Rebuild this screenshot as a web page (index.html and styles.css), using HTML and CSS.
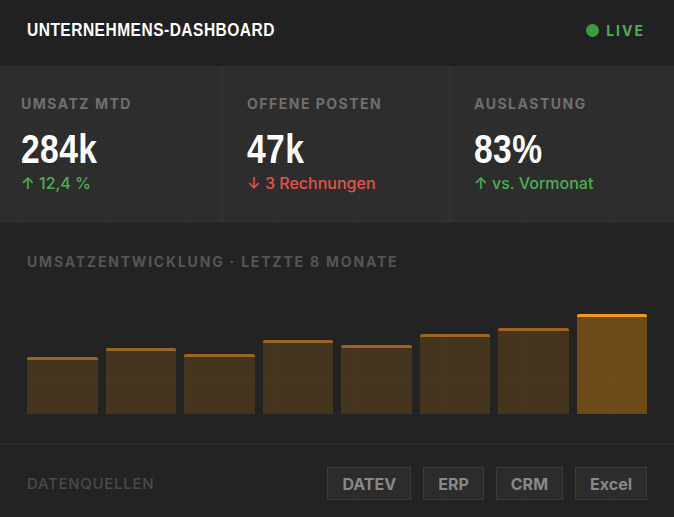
FILE: index.html
```html
<!DOCTYPE html>
<html lang="de">
<head>
  <meta charset="UTF-8" />
  <meta name="viewport" content="width=device-width, initial-scale=1.0">
  <title>Unternehmens-Dashboard</title>
  <link rel="stylesheet" href="styles.css">
</head>
<body>
  <div class="dash">
    <header class="topbar">
      <h1>UNTERNEHMENS-DASHBOARD</h1>
      <span class="live"><i class="dot"></i>LIVE</span>
    </header>

    <section class="stats">
      <div class="stat">
        <div class="stat-label">UMSATZ MTD</div>
        <div class="stat-value">284k</div>
        <div class="stat-delta up">↑ 12,4 %</div>
      </div>
      <div class="stat">
        <div class="stat-label">OFFENE POSTEN</div>
        <div class="stat-value">47k</div>
        <div class="stat-delta down">↓ 3 Rechnungen</div>
      </div>
      <div class="stat">
        <div class="stat-label">AUSLASTUNG</div>
        <div class="stat-value">83%</div>
        <div class="stat-delta up">↑ vs. Vormonat</div>
      </div>
    </section>

    <section class="chart">
      <h2>UMSATZENTWICKLUNG · LETZTE 8 MONATE</h2>
      <div class="bars">
        <div class="bar" style="height: 57%"></div>
        <div class="bar" style="height: 66%"></div>
        <div class="bar" style="height: 60%"></div>
        <div class="bar" style="height: 74%"></div>
        <div class="bar" style="height: 69%"></div>
        <div class="bar" style="height: 80%"></div>
        <div class="bar" style="height: 86%"></div>
        <div class="bar current" style="height: 100%"></div>
      </div>
    </section>

    <footer class="sources">
      <span class="sources-label">DATENQUELLEN</span>
      <div class="chips">
        <button class="chip">DATEV</button>
        <button class="chip">ERP</button>
        <button class="chip">CRM</button>
        <button class="chip">Excel</button>
      </div>
    </footer>
  </div>
</body>
</html>
```

FILE: styles.css
```css
:root {
  --bg: #232323;
  --header-bg: #212121;
  --band-bg: #2d2d2d;
  --line: #363636;
  --green: #4caf50;
  --red: #e0554b;
  --orange: #f29b1c;
  --display: "Liberation Sans", sans-serif;
}
* { box-sizing: border-box; margin: 0; padding: 0; }
html, body { height: 100%; }
body {
  background: var(--bg);
  color: #fff;
  font-family: "Inter", "Liberation Sans", sans-serif;
  overflow: hidden;
}

/* faint grid over the whole card */
.dash { position: relative; min-height: 100%; }
.dash::after {
  content: "";
  position: absolute; inset: 0;
  pointer-events: none;
  background-image:
    linear-gradient(to right, rgba(255, 255, 255, 0.02) 1px, transparent 1px),
    linear-gradient(to bottom, rgba(255, 255, 255, 0.02) 1px, transparent 1px);
  background-size: 84px 84px;
  background-position: 22px 46px;
}

.topbar {
  height: 66px;
  background: var(--header-bg);
  display: flex; align-items: center; justify-content: space-between;
  padding: 0 29px 6px 27px;
}
/* no condensed face installed: squeeze the display font */
.topbar h1 {
  font-family: var(--display);
  font-weight: 700;
  font-size: 19px;
  letter-spacing: 0.6px;
  color: #fff;
  transform: scaleX(0.817);
  transform-origin: left center;
}
.live {
  display: flex; align-items: center; gap: 7px;
  color: var(--green);
  font-size: 14px; font-weight: 700;
  letter-spacing: 2px;
}
.dot {
  width: 13px; height: 13px; border-radius: 50%;
  background: #3f9a46;
}

.stats {
  display: grid;
  grid-template-columns: 223px 227px 1fr;
  background: var(--band-bg);
  border-bottom: 1px solid var(--line);
}
.stat {
  padding: 29px 10px 28px 24px;
  border-right: 1px solid var(--line);
}
.stat:first-child { padding-left: 21px; }
.stat:last-child { border-right: none; }
.stat-label {
  font-size: 14px; line-height: 17px; font-weight: 700;
  letter-spacing: 1.5px;
  color: #6f6f6f;
}
.stat-value {
  margin-top: 17px;
  font-family: var(--display);
  font-weight: 700;
  font-size: 40px; line-height: 1;
  letter-spacing: 0.5px;
  transform: scaleX(0.84);
  transform-origin: left center;
}
.stat-delta {
  margin-top: 4px;
  font-size: 16px; line-height: 20px; font-weight: 500;
}
.stat-delta.up { color: var(--green); }
.stat-delta.down { color: var(--red); }

.chart {
  padding: 31px 27px 30px 27px;
  border-bottom: 1px solid #2d2d2d;
}
.chart h2 {
  font-size: 14px; line-height: 17px; font-weight: 700;
  letter-spacing: 1.8px;
  color: #555;
}
.bars {
  margin-top: 44px;
  height: 100px;
  display: flex; align-items: flex-end; gap: 8px;
}
.bar {
  flex: 1;
  background: #45351f;
  border-top: 3px solid #9a6520;
  border-radius: 2px 2px 0 0;
}
.bar.current {
  background: #6c4b19;
  border-top-color: var(--orange);
}

.sources {
  display: flex; align-items: center; justify-content: space-between;
  padding: 22px 27px 0 27px;
}
.sources-label {
  font-size: 15px; font-weight: 500; letter-spacing: 0.7px;
  color: #4a4a4a;
}
.chips { display: flex; gap: 12px; }
.chip {
  height: 33px;
  padding: 0 14px;
  background: #2c2c2c;
  border: 1px solid #3a3a3a;
  color: #888;
  font-family: "Inter", sans-serif;
  font-size: 16px; font-weight: 700;
}
```
